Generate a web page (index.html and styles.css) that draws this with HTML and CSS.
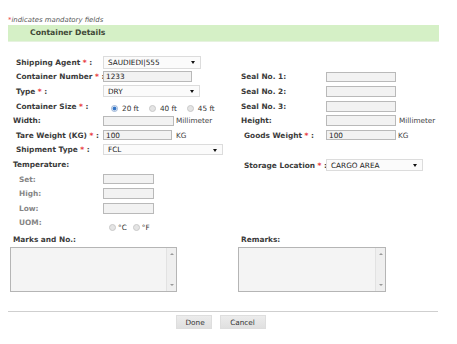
FILE: index.html
```html
<!DOCTYPE html>
<html>
<head>
  <link rel="stylesheet" href="styles.css">
</head>
<body>

<div class="note"><span class="req">*</span>indicates mandatory fields</div>
<div class="section-head">Container Details</div>

<div class="form">
  <!-- row 1 -->
  <label class="lbl">Shipping Agent <span class="req">*</span> :</label>
  <div class="field"><span class="select w98 h13">SAUDIEDI|555</span></div>
  <div></div><div></div>

  <!-- row 2 -->
  <label class="lbl">Container Number <span class="req">*</span> :</label>
  <div class="field"><input class="inp w89 h11" type="text" value="1233"></div>
  <label class="lbl flush">Seal No. 1:</label>
  <div class="field"><input class="inp w70" type="text"></div>

  <!-- row 3 -->
  <label class="lbl">Type <span class="req">*</span> :</label>
  <div class="field"><span class="select w97 h12">DRY</span></div>
  <label class="lbl flush">Seal No. 2:</label>
  <div class="field"><input class="inp w70 h11" type="text"></div>

  <!-- row 4 -->
  <label class="lbl">Container Size <span class="req">*</span> :</label>
  <div class="field radios">
    <span class="radio on"></span><span class="rtxt">20 ft</span>
    <span class="radio"></span><span class="rtxt">40 ft</span>
    <span class="radio"></span><span class="rtxt">45 ft</span>
  </div>
  <label class="lbl flush">Seal No. 3:</label>
  <div class="field"><input class="inp w70 h11" type="text"></div>

  <!-- row 5 -->
  <label class="lbl flush">Width:</label>
  <div class="field"><input class="inp w71" type="text"><span class="unit">Millimeter</span></div>
  <label class="lbl flush">Height:</label>
  <div class="field"><input class="inp w70 h11" type="text"><span class="unit u3">Millimeter</span></div>

  <!-- row 6 -->
  <label class="lbl">Tare Weight (KG) <span class="req">*</span> :</label>
  <div class="field"><input class="inp w69" type="text" value="100"><span class="unit u4">KG</span></div>
  <label class="lbl">Goods Weight <span class="req">*</span> :</label>
  <div class="field"><input class="inp w70" type="text" value="100"><span class="unit u2">KG</span></div>

  <!-- row 7 -->
  <label class="lbl">Shipment Type <span class="req">*</span> :</label>
  <div class="field"><span class="select w120 h11">FCL</span></div>
  <div></div><div></div>

  <!-- row 8 -->
  <label class="lbl flush">Temperature:</label>
  <div></div>
  <label class="lbl low">Storage Location <span class="req">*</span> :</label>
  <div class="field low"><span class="select w97 h12">CARGO AREA</span></div>

  <!-- row 9-12 -->
  <label class="lbl sub">Set:</label>
  <div class="field"><input class="inp w51" type="text"></div>
  <div></div><div></div>

  <label class="lbl sub">High:</label>
  <div class="field"><input class="inp w51 h11" type="text"></div>
  <div></div><div></div>

  <label class="lbl sub">Low:</label>
  <div class="field"><input class="inp w51 h11" type="text"></div>
  <div></div><div></div>

  <label class="lbl sub">UOM:</label>
  <div class="field radios uom">
    <span class="radio"></span><span class="rtxt">&deg;C</span>
    <span class="radio"></span><span class="rtxt">&deg;F</span>
  </div>
  <div></div><div></div>
</div>

<div class="notes">
  <div class="note-col">
    <label class="lbl flush">Marks and No.:</label>
    <div class="area w167">
      <textarea></textarea>
      <span class="track"><span class="up"></span><span class="down"></span></span>
    </div>
  </div>
  <div class="note-col right">
    <label class="lbl flush">Remarks:</label>
    <div class="area w148">
      <textarea></textarea>
      <span class="track"><span class="up"></span><span class="down"></span></span>
    </div>
  </div>
</div>

<div class="actions">
  <button class="btn">Done</button>
  <button class="btn">Cancel</button>
</div>

</body>
</html>
```

FILE: styles.css
```css
body {
  margin: 0;
  font-family: "DejaVu Sans", Verdana, sans-serif;
  font-size: 7.3px;
  color: #333;
  background: #fff;
}
.req {
  color: #e8383a;
}
.note {
  padding: 15px 0 0 8px;
  height: 10px;
  line-height: 10px;
  font-style: italic;
  font-size: 6.9px;
  color: #555;
}
.section-head {
  margin: 0 18px 0 8px;
  height: 16px;
  line-height: 16px;
  padding-left: 22px;
  background-color: #d5f0c6;
  border-bottom: 1px solid #e6f2df;
  font-weight: bold;
  font-size: 7.7px;
  color: #3f4836;
}
.form {
  display: grid;
  grid-template-columns: 90px 138px 85px 1fr;
  grid-auto-rows: 14.6px;
  padding: 13px 0 0 13px;
  align-items: center;
}
.lbl {
  padding-left: 3px;
  font-weight: bold;
  font-size: 7.4px;
  color: #3b3b3b;
  white-space: nowrap;
}
.lbl.flush {
  padding-left: 0;
}
.lbl.sub {
  padding-left: 6px;
  color: #858585;
}
.low {
  position: relative;
  top: 1px;
}
.field {
  display: flex;
  align-items: center;
}
.inp {
  box-sizing: border-box;
  height: 10px;
  padding: 0 2px;
  margin: 0;
  border: 1px solid #b9b9b9;
  background: #f2f2f2;
  font-family: inherit;
  font-size: 7.3px;
  color: #222;
  outline: none;
}
.select {
  position: relative;
  box-sizing: border-box;
  display: flex;
  align-items: center;
  padding-left: 4px;
  border: 1px solid #dcdcdc;
  background: #fbfbfb;
  color: #222;
  font-size: 7.3px;
}
.select::after {
  content: "";
  position: absolute;
  right: 5px;
  top: 50%;
  margin-top: -1px;
  border-left: 2.5px solid transparent;
  border-right: 2.5px solid transparent;
  border-top: 3px solid #111;
}
.w51 { width: 51px; }
.w69 { width: 69px; }
.w70 { width: 70px; }
.w71 { width: 71px; }
.w89 { width: 89px; }
.w97 { width: 97px; }
.w98 { width: 98px; }
.w120 { width: 120px; }
.h11 { height: 11px; }
.h12 { height: 12px; }
.h13 { height: 13px; }
.unit {
  margin-left: 2px;
  color: #444;
}
.unit.u2 { margin-left: 2px; }
.unit.u3 { margin-left: 3px; }
.unit.u4 { margin-left: 4px; }
.radios {
  padding-left: 8px;
  position: relative;
  top: 2px;
}
.radios.uom {
  padding-left: 6px;
  top: 5px;
}
.radio {
  box-sizing: border-box;
  width: 7px;
  height: 7px;
  border-radius: 50%;
  border: 1px solid #c9c9c9;
  background: #e4e4e4;
}
.radio.on {
  border-color: #9cb4d6;
  background: radial-gradient(circle, #2f6fc0 0, #3a7ccc 1.6px, #dfe8f4 2.2px);
}
.rtxt {
  margin: 0 10px 0 4px;
  color: #333;
}
.uom .rtxt {
  margin: 0 6px 0 2px;
}
.notes {
  display: flex;
  padding: 4px 0 0 10px;
}
.note-col {
  display: flex;
  flex-direction: column;
}
.note-col .lbl {
  height: 12px;
  line-height: 12px;
  margin-left: 3px;
  margin-bottom: 1px;
}
.note-col.right {
  margin-left: 61px;
}
.note-col.right .lbl {
  margin-left: 3px;
}
.area {
  position: relative;
  box-sizing: border-box;
  height: 45px;
  border: 1px solid #b5b5b5;
  background: #f4f4f4;
  display: flex;
}
.w167 { width: 167px; }
.w148 { width: 148px; }
.area textarea {
  flex: 1;
  border: 0;
  margin: 0;
  padding: 0;
  resize: none;
  background: transparent;
  outline: none;
}
.track {
  position: relative;
  width: 9px;
  border-left: 1px solid #e2e2e2;
  background: #efefef;
}
.up, .down {
  position: absolute;
  left: 2.5px;
  border-left: 2px solid transparent;
  border-right: 2px solid transparent;
}
.up {
  top: 5px;
  border-bottom: 2px solid #999;
}
.down {
  bottom: 5px;
  border-top: 2px solid #999;
}
.actions {
  margin: 19px 19px 0 8px;
  padding-top: 3px;
  border-top: 1px solid #cfcfcf;
  display: flex;
  justify-content: center;
  gap: 8px;
  padding-right: 5px;
}
.btn {
  box-sizing: border-box;
  height: 14px;
  padding: 0 9px;
  border: 1px solid #dedede;
  background: linear-gradient(#ececec, #e0e0e0);
  font-family: inherit;
  font-size: 7.3px;
  color: #333;
}
.btn:first-child {
  width: 36px;
}
.btn:last-child {
  width: 46px;
}
```
